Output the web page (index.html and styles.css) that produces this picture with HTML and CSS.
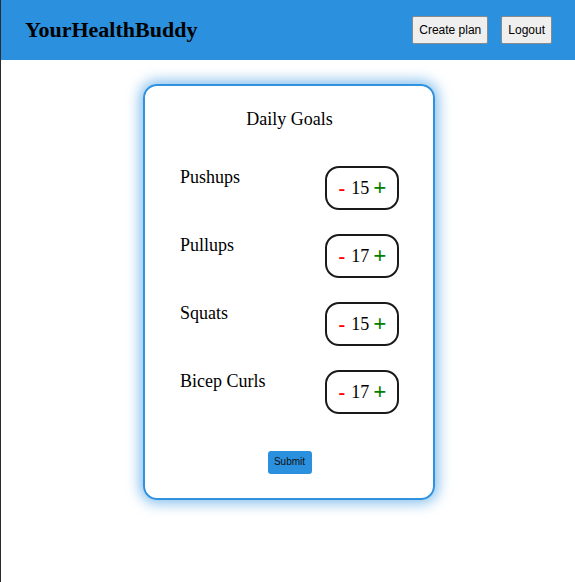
FILE: index.html
```html
<!DOCTYPE html>
<html lang="en">
<head>
<meta charset="utf-8">
<title>YourHealthBuddy</title>
<link rel="stylesheet" href="styles.css">
</head>
<body>
<header class="topbar">
  <h1 class="brand">YourHealthBuddy</h1>
  <nav class="actions">
    <button class="nav-btn">Create plan</button>
    <button class="nav-btn">Logout</button>
  </nav>
</header>
<main class="page">
  <section class="card">
    <h2 class="card-title">Daily Goals</h2>
    <div class="goal">
      <span class="goal-name">Pushups</span>
      <div class="counter"><span class="minus">-</span><span class="count">15</span><span class="plus">+</span></div>
    </div>
    <div class="goal">
      <span class="goal-name">Pullups</span>
      <div class="counter"><span class="minus">-</span><span class="count">17</span><span class="plus">+</span></div>
    </div>
    <div class="goal">
      <span class="goal-name">Squats</span>
      <div class="counter"><span class="minus">-</span><span class="count">15</span><span class="plus">+</span></div>
    </div>
    <div class="goal">
      <span class="goal-name">Bicep Curls</span>
      <div class="counter"><span class="minus">-</span><span class="count">17</span><span class="plus">+</span></div>
    </div>
    <div class="submit-row">
      <button class="submit-btn">Submit</button>
    </div>
  </section>
</main>
</body>
</html>
```
FILE: styles.css
```css
html, body {
  margin: 0;
  padding: 0;
  background: #fff;
}
body {
  font-family: "Liberation Serif", "Times New Roman", serif;
  color: #000;
  min-height: 582px;
}
body::before {
  content: "";
  position: fixed;
  left: 0;
  top: 0;
  bottom: 0;
  width: 1px;
  background: #2b2b2b;
  z-index: 10;
}
.topbar {
  height: 60px;
  background: #2b90dd;
  display: flex;
  align-items: center;
  justify-content: space-between;
  padding: 0 23px 0 25px;
  box-sizing: border-box;
}
.brand {
  margin: 0;
  font-size: 22px;
  font-weight: bold;
  font-family: "Liberation Serif", serif;
}
.actions {
  display: flex;
  gap: 13px;
  align-items: center;
  margin-top: -1px;
}
.nav-btn {
  font-family: "Liberation Sans", Arial, sans-serif;
  font-size: 12px;
  line-height: 14px;
  padding: 6px 6px;
  background: #efefef;
  border: 1px solid #8a8a8a;
  border-radius: 2px;
  color: #000;
}
.page {
  display: flex;
  justify-content: center;
  padding: 24px 0 0 3px;
}
.card {
  width: 292px;
  box-sizing: border-box;
  border: 2px solid #2f92e0;
  border-radius: 14px;
  box-shadow: 0 0 14px 3px rgba(43, 144, 221, 0.6);
  padding: 23px 34px 24px 35px;
}
.card-title {
  margin: 0 0 37px;
  font-size: 18px;
  font-weight: normal;
  text-align: center;
  line-height: 20px;
}
.goal {
  display: flex;
  justify-content: space-between;
  align-items: flex-start;
  margin-bottom: 24px;
}
.goal-name {
  font-size: 18px;
  line-height: 20px;
  margin-top: 1px;
}
.counter {
  width: 74px;
  height: 44px;
  box-sizing: border-box;
  border: 2px solid #1a1a1a;
  border-radius: 14px;
  display: flex;
  align-items: center;
  justify-content: center;
  gap: 6px;
  padding-left: 1px;
  font-size: 18px;
}
.minus {
  color: #ff0000;
  font-weight: bold;
  font-size: 20px;
}
.plus {
  color: #008000;
  font-weight: bold;
  font-size: 23px;
  margin-left: -2px;
}
.count {
  color: #000;
}
.submit-row {
  display: flex;
  justify-content: center;
  padding-top: 13px;
}
.submit-btn {
  font-family: "Liberation Sans", Arial, sans-serif;
  font-size: 10px;
  line-height: 12px;
  padding: 5px 6px 6px;
  width: 44px;
  background: #2b90dd;
  border: none;
  border-radius: 3px;
  color: #111;
}
```
